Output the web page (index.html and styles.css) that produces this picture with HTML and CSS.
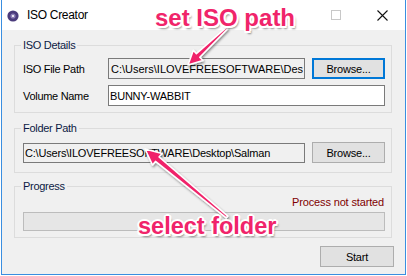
FILE: index.html
```html
<!DOCTYPE html>
<html>
<head>
<meta charset="utf-8">
<link rel="stylesheet" href="styles.css">
</head>
<body>
<div class="window">
  <div class="titlebar">
    <svg class="app-icon" width="12" height="12" viewBox="0 0 12 12">
      <circle cx="6" cy="6" r="5.6" fill="#4a3b7c"/>
      <circle cx="6" cy="6" r="2.6" fill="#8d7fb8"/>
      <circle cx="6" cy="6" r="1.1" fill="#ffffff"/>
    </svg>
    <span class="title">ISO Creator</span>
    <span class="tb-btn">
      <svg width="10" height="10" viewBox="0 0 10 10"><rect x="0.5" y="0.5" width="9" height="9" fill="none" stroke="#c8c8c8"/></svg>
    </span>
    <span class="tb-btn">
      <svg width="11" height="11" viewBox="0 0 11 11"><path d="M0.5 0.5 L10.5 10.5 M10.5 0.5 L0.5 10.5" stroke="#111" stroke-width="1.1"/></svg>
    </span>
  </div>
  <div class="client">
    <fieldset class="group">
      <legend>ISO Details</legend>
      <div class="grid">
        <span class="label">ISO File Path</span>
        <input class="textbox readonly iso" value="C:\Users\ILOVEFREESOFTWARE\Desktop\Salman.iso" readonly>
        <span class="button focused">Browse...</span>
        <span class="label">Volume Name</span>
        <input class="textbox wide" value="BUNNY-WABBIT">
      </div>
    </fieldset>
    <fieldset class="group g2">
      <legend>Folder Path</legend>
      <div class="folder-row">
        <input class="textbox readonly folder" value="C:\Users\ILOVEFREESOFTWARE\Desktop\Salman" readonly>
        <span class="button">Browse...</span>
      </div>
    </fieldset>
    <fieldset class="group g3">
      <legend>Progress</legend>
      <div class="status">Process not started</div>
      <div class="progress"></div>
    </fieldset>
    <div class="footer">
      <span class="button start">Start</span>
    </div>
  </div>

  <svg class="arrows" width="407" height="276" viewBox="0 0 407 276">
    <defs>
      <filter id="sh" x="-20%" y="-20%" width="140%" height="140%">
        <feDropShadow dx="1" dy="1.5" stdDeviation="1" flood-color="#000" flood-opacity="0.45"/>
      </filter>
    </defs>
    <g filter="url(#sh)" fill="#f0246a" stroke="#ffffff" stroke-width="1.6" stroke-linejoin="round">
      <polygon points="226.3,27.3 196.4,53.6 193.3,50.3 188,65 202.9,60.5 199.8,57.2 227.7,28.7"/>
      <polygon points="227.8,216.1 159.1,157.0 162.1,153.4 145,149 152.5,165.0 155.5,161.4 226.2,217.9"/>
    </g>
  </svg>
  <div class="note note1">set ISO path</div>
  <div class="note note2">select folder</div>
</div>
</body>
</html>
```

FILE: styles.css
```css
* { box-sizing: border-box; }
html, body { margin: 0; padding: 0; background: #ffffff; }
body {
  font-family: "Liberation Sans", Arial, sans-serif;
  font-size: 11px;
  color: #000;
}
.window {
  position: relative;
  margin-left: 1px;
  width: 405px;
  height: 275px;
  border: 1px solid #3a8ee0;
  border-top: none;
  background: #f0f0f0;
  display: flex;
  flex-direction: column;
}
.titlebar {
  height: 30px;
  background: #ffffff;
  display: flex;
  align-items: center;
  flex: none;
}
.app-icon { margin-left: 5px; margin-top: 1px; flex: none; }
.title {
  margin-left: 8px;
  font-size: 12px;
  letter-spacing: -0.3px;
  flex: 1;
  color: #000;
}
.tb-btn {
  width: 46px;
  height: 30px;
  display: flex;
  align-items: center;
  justify-content: center;
}
.client {
  padding: 8px 13px 0 12px;
}
.group {
  margin: 0;
  border: 1px solid #dcdcdc;
  padding: 6px 6px 6px 8px;
  min-width: 0;
}
.group legend {
  padding: 0 2px;
  margin-left: -2px;
  line-height: 14px;
  height: 14px;
  color: #0c1a44;
  letter-spacing: -0.3px;
}
.grid {
  display: grid;
  grid-template-columns: 78px 197px 73px;
  column-gap: 7px;
  row-gap: 6px;
}
.grid .label { grid-column: 1; }
.label {
  display: flex;
  align-items: center;
  height: 21px;
  letter-spacing: -0.3px;
  white-space: nowrap;
}
.textbox {
  display: block;
  width: 100%;
  height: 21px;
  margin: 0;
  border: 1px solid #7a7a7a;
  background: #ffffff;
  font-family: "Liberation Sans", Arial, sans-serif;
  font-size: 11px;
  letter-spacing: -0.2px;
  color: #000;
  padding: 0 1px;
  outline: none;
}
.textbox.readonly { background: #f0f0f0; }
.textbox.iso { padding-left: 2px; letter-spacing: 0; }
.grid .textbox { grid-column: 2; }
.grid .textbox.wide { grid-column: 2 / 4; }
.button {
  display: flex;
  align-items: center;
  justify-content: center;
  height: 21px;
  border: 1px solid #adadad;
  background: #e1e1e1;
  letter-spacing: -0.2px;
}
.button.focused { border: 2px solid #0078d7; }
.g2 { margin-top: 8px; padding-top: 7px; padding-bottom: 9px; }
.folder-row {
  display: grid;
  grid-template-columns: 282px 73px;
  column-gap: 7px;
  align-items: center;
}
.folder-row .textbox { height: 20px; }
.g3 { margin-top: 6px; padding-top: 3px; padding-bottom: 6px; }
.status {
  text-align: right;
  color: #800000;
  line-height: 13px;
  letter-spacing: -0.15px;
  padding-right: 1px;
}
.progress {
  margin-top: 3px;
  height: 19px;
  border: 1px solid #bcbcbc;
  background: #e6e6e6;
}
.footer {
  display: flex;
  justify-content: flex-end;
  margin-top: 8px;
  margin-right: -2px;
}
.button.start { width: 74px; }
.arrows {
  position: absolute;
  left: -2px;
  top: 0;
  pointer-events: none;
}
.note {
  position: absolute;
  font-family: "Liberation Sans", Arial, sans-serif;
  font-weight: bold;
  font-size: 24px;
  line-height: 28px;
  color: #f0246a;
  white-space: nowrap;
  text-shadow:
    -1.5px -1.5px 0 #fff, 1.5px -1.5px 0 #fff, -1.5px 1.5px 0 #fff, 1.5px 1.5px 0 #fff,
    0 -2px 0 #fff, 0 2px 0 #fff, -2px 0 0 #fff, 2px 0 0 #fff,
    2px 3px 2px rgba(0,0,0,0.45);
}
.note1 { left: 153px; top: 4px; }
.note2 { left: 136px; top: 212px; font-size: 23.5px; }
```
